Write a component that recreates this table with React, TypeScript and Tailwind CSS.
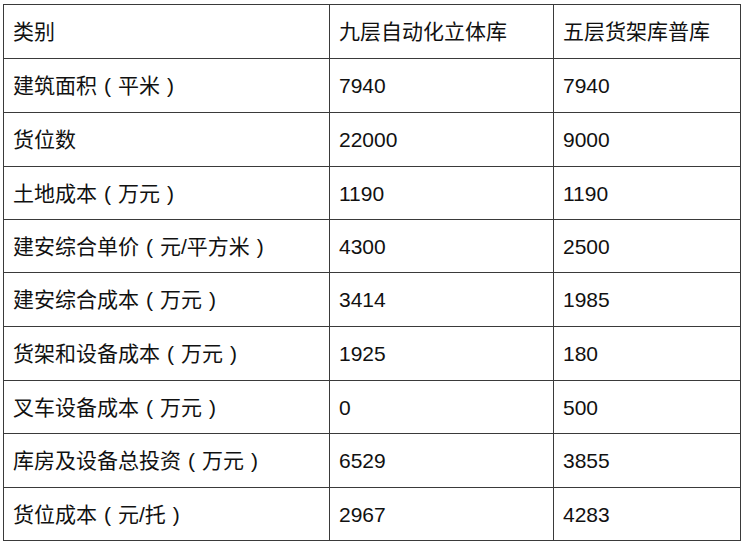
import React from "react";

const rows: [string, string, string][] = [
  ["类别", "九层自动化立体库", "五层货架库普库"],
  ["建筑面积（平米）", "7940", "7940"],
  ["货位数", "22000", "9000"],
  ["土地成本（万元）", "1190", "1190"],
  ["建安综合单价（元/平方米）", "4300", "2500"],
  ["建安综合成本（万元）", "3414", "1985"],
  ["货架和设备成本（万元）", "1925", "180"],
  ["叉车设备成本（万元）", "0", "500"],
  ["库房及设备总投资（万元）", "6529", "3855"],
  ["货位成本（元/托）", "2967", "4283"],
];

function Label({ text }: { text: string }) {
  const parts = text.split(/([（）])/);
  return (
    <>
      {parts.map((p, i) =>
        p === "（" ? (
          <span key={i} className="inline-block w-[1em] text-center">
            (
          </span>
        ) : p === "）" ? (
          <span key={i} className="inline-block w-[1em] text-center">
            )
          </span>
        ) : (
          <React.Fragment key={i}>{p}</React.Fragment>
        )
      )}
    </>
  );
}

export default function App() {
  return (
    <div
      className="w-[746px] h-[547px] bg-white pt-[4px] pl-[3px] text-[#111]"
      style={{ fontFamily: '"Liberation Sans", "Noto Sans CJK SC", sans-serif' }}
    >
      <div className="grid w-[738px] grid-cols-[326px_224px_187px] grid-rows-[54px_54px_54px_53px_53px_54px_54px_53px_54px_53px] border-l border-t border-[#3a3a3a] text-[21px] leading-none">
        {rows.map((r, i) => (
          <React.Fragment key={i}>
            {r.map((c, j) => (
              <div
                key={j}
                className="flex items-center border-r border-b border-[#3a3a3a] pl-[9px] whitespace-nowrap"
              >
                <span>
                  <Label text={c} />
                </span>
              </div>
            ))}
          </React.Fragment>
        ))}
      </div>
    </div>
  );
}
